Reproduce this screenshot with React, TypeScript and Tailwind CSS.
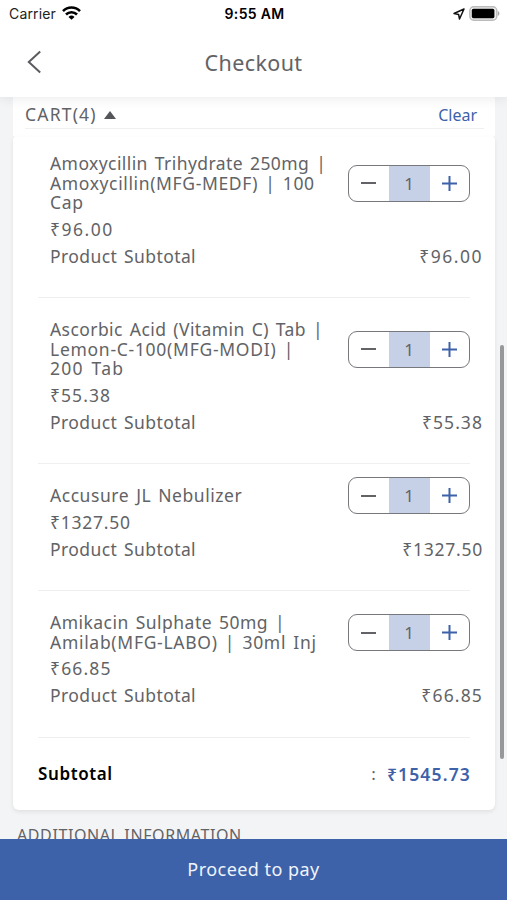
type CartLine = {
  text: string;
  tracking: string;
};

type CartItem = {
  id: number;
  name: CartLine[];
  price: string;
  priceTracking: string;
  qty: number;
};

const items: CartItem[] = [
  {
    id: 1,
    name: [
      { text: "Amoxycillin Trihydrate 250mg |", tracking: "tracking-[0.42px]" },
      { text: "Amoxycillin(MFG-MEDF) | 100", tracking: "tracking-[0.63px]" },
      { text: "Cap", tracking: "tracking-[0.7px]" },
    ],
    price: "₹96.00",
    priceTracking: "tracking-[1.5px]",
    qty: 1,
  },
  {
    id: 2,
    name: [
      { text: "Ascorbic Acid (Vitamin C) Tab |", tracking: "tracking-[0.42px]" },
      { text: "Lemon-C-100(MFG-MODI) |", tracking: "tracking-[0.72px]" },
      { text: "200 Tab", tracking: "tracking-[1.25px]" },
    ],
    price: "₹55.38",
    priceTracking: "tracking-[1.05px]",
    qty: 1,
  },
  {
    id: 3,
    name: [{ text: "Accusure JL Nebulizer", tracking: "tracking-[0.54px]" }],
    price: "₹1327.50",
    priceTracking: "tracking-[0.75px]",
    qty: 1,
  },
  {
    id: 4,
    name: [
      { text: "Amikacin Sulphate 50mg |", tracking: "tracking-[0.47px]" },
      { text: "Amilab(MFG-LABO) | 30ml Inj", tracking: "tracking-[0.7px]" },
    ],
    price: "₹66.85",
    priceTracking: "tracking-[1.15px]",
    qty: 1,
  },
];

function StatusBar() {
  return (
    <div className="grid h-[27px] grid-cols-3 items-center pl-[9px] pr-[7px] font-['Inter',sans-serif] text-[14px] leading-none text-black">
      <div className="flex items-center gap-[6px]">
        <span className="tracking-[0.15px] text-[#222]">Carrier</span>
        <svg width="19" height="14" viewBox="0 0 19 14" fill="none" stroke="#000" strokeWidth="2.6" className="mb-[2px]">
          <path d="M1 5.1a12 12 0 0 1 17 0" />
          <path d="M4 8.5a7.8 7.8 0 0 1 11 0" />
          <path d="M6.5 10.9a4.3 4.3 0 0 1 6 0L9.5 13.8z" fill="#000" stroke="none" />
        </svg>
      </div>
      <span className="whitespace-nowrap text-center text-[14px] font-semibold tracking-[0.3px]">9:55 AM</span>
      <div className="flex items-center justify-end gap-[4px]">
        <svg width="12" height="12" viewBox="0 0 12 12" fill="none" stroke="#111" strokeWidth="1.5" strokeLinejoin="round">
          <path d="M11 1 1 5.5l4.6.9.9 4.6z" />
        </svg>
        <svg width="31" height="15" viewBox="0 0 31 15">
          <rect x="0.8" y="0.8" width="27" height="13.4" rx="4" fill="#eee" stroke="#bbb" strokeWidth="1.4" />
          <rect x="2.8" y="2.8" width="22.6" height="9.4" rx="1.6" fill="#000" />
          <path d="M28.8 5.1c2.2.8 2.2 4 0 4.8z" fill="#aaa" />
        </svg>
      </div>
    </div>
  );
}

function Header() {
  return (
    <div className="relative z-10 h-[97px] shrink-0 bg-white shadow-[0_1px_12px_rgba(0,0,0,0.09)]">
      <StatusBar />
      <div className="grid h-[70px] grid-cols-[1fr_auto_1fr] items-center pl-[27px]">
        <svg width="15" height="24" viewBox="0 0 15 24" fill="none" stroke="#5b5c60" strokeWidth="2">
          <path d="M13.2 1.6 1.8 12l11.4 10.6" />
        </svg>
        <h1 className="mr-[27px] pt-[2px] text-[21.5px] leading-none tracking-[0.4px]">Checkout</h1>
      </div>
    </div>
  );
}

function Stepper({ qty }: { qty: number }) {
  return (
    <div className="-my-[9px] flex h-[37px] w-[122px] shrink-0 overflow-hidden rounded-[9px] border-[1.5px] border-[#77787b]">
      <button className="flex flex-1 items-center justify-center">
        <span className="h-[2px] w-[15px] bg-[#626366]" />
      </button>
      <span className="flex w-[41px] items-center justify-center bg-[#c6d0e7] text-[17px]">{qty}</span>
      <button className="flex flex-1 items-center justify-center">
        <svg width="15" height="15" viewBox="0 0 15 15" stroke="#3d62a9" strokeWidth="2">
          <path d="M0 7.5h15M7.5 0v15" />
        </svg>
      </button>
    </div>
  );
}

function CartRow({ item }: { item: CartItem }) {
  return (
    <div className="pt-[22px] text-[17.5px]">
      <div className="flex items-center justify-between pl-[37px] pr-[25px]">
        <div className="[word-spacing:2px]">
          {item.name.map((line) => (
            <p key={line.text} className={`h-[19.5px] whitespace-nowrap leading-[19.5px] ${line.tracking}`}>
              {line.text}
            </p>
          ))}
        </div>
        <Stepper qty={item.qty} />
      </div>
      <p className={`mt-[3px] h-[27px] pl-[37px] leading-[27px] ${item.priceTracking}`}>{item.price}</p>
      <div className="flex h-[27px] justify-between pl-[37px] pr-[12px] leading-[27px]">
        <span className="tracking-[0.4px] [word-spacing:2px]">Product Subtotal</span>
        <span className={item.priceTracking}>{item.price}</span>
      </div>
      <div className="ml-[25px] mr-[25px] h-[28.5px] border-b border-[#efefef]" />
    </div>
  );
}

export default function App() {
  return (
    <div className="flex h-[900px] w-[507px] flex-col overflow-hidden bg-[#f3f4f6] font-['Noto_Sans',sans-serif] text-[17px] text-[#626366]">
      <Header />

      <div className="relative min-h-0 flex-1 overflow-hidden pl-[13px] pr-[12px]">
        <div className="h-[40px] rounded-b-[3px] bg-white pl-[12px] pr-[11px]">
          <div className="flex h-[32px] items-center justify-between border-b border-[#f0f0f1] pr-[7px]">
            <div className="flex items-center gap-[7px] pt-[4px]">
              <span className="text-[17.5px] leading-none tracking-[1.2px]">CART(4)</span>
              <svg width="12" height="8" viewBox="0 0 12 8" fill="#55565a">
                <path d="M6 0l6 8H0z" />
              </svg>
            </div>
            <button className="pt-[4px] text-[16px] leading-none text-[#3d62a9]">Clear</button>
          </div>
        </div>

        <div className="flex h-[673px] flex-col rounded-t-[3px] rounded-b-[6px] bg-white shadow-[0_2px_4px_rgba(0,0,0,0.08)]">
          <div className="-mt-[5px]">
            {items.map((item) => (
              <CartRow key={item.id} item={item} />
            ))}
          </div>

          <div className="flex h-[75px] items-center pl-[25px] pr-[24px] font-semibold">
            <span className="tracking-[0.6px] text-black">Subtotal</span>
            <span className="ml-auto mr-[11px] font-normal">:</span>
            <span className="text-[17.5px] tracking-[1.15px] text-[#3d62a9]">₹1545.73</span>
          </div>
        </div>

        <p className="mt-[15px] pl-[4px] text-[16px] leading-[20px] tracking-[0.6px]">ADDITIONAL INFORMATION</p>

        {/* scroll indicator */}
        <div className="absolute right-[3px] top-[248px] h-[414px] w-[4px] rounded-full bg-[#97989a]" />
      </div>

      <button className="h-[61px] shrink-0 bg-[#3d62a9] text-[18px] tracking-[0.45px] text-[#f0f4fc]">
        Proceed to pay
      </button>
    </div>
  );
}
